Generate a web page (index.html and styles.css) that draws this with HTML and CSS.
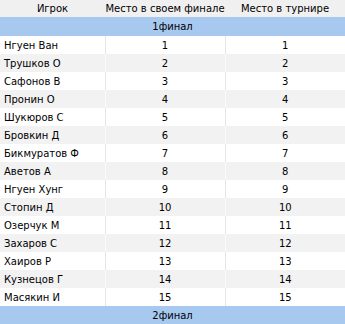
FILE: index.html
```html
<!DOCTYPE html>
<html>
<head>
<meta charset="utf-8">
<link rel="stylesheet" href="styles.css">
</head>
<body>
<table class="grid">
  <colgroup>
    <col class="c1"><col class="c2"><col class="c3">
  </colgroup>
  <thead>
    <tr class="head"><th>Игрок</th><th>Место в своем финале</th><th>Место в турнире</th></tr>
  </thead>
  <tbody>
    <tr class="group first"><td colspan="3">1финал</td></tr>
    <tr class="odd"><td class="name">Нгуен Ван</td><td>1</td><td>1</td></tr>
    <tr class="even"><td class="name">Трушков О</td><td>2</td><td>2</td></tr>
    <tr class="odd"><td class="name">Сафонов В</td><td>3</td><td>3</td></tr>
    <tr class="even"><td class="name">Пронин О</td><td>4</td><td>4</td></tr>
    <tr class="odd"><td class="name">Шукюров С</td><td>5</td><td>5</td></tr>
    <tr class="even"><td class="name">Бровкин Д</td><td>6</td><td>6</td></tr>
    <tr class="odd"><td class="name">Бикмуратов Ф</td><td>7</td><td>7</td></tr>
    <tr class="even"><td class="name">Аветов А</td><td>8</td><td>8</td></tr>
    <tr class="odd"><td class="name">Нгуен Хунг</td><td>9</td><td>9</td></tr>
    <tr class="even"><td class="name">Стопин Д</td><td>10</td><td>10</td></tr>
    <tr class="odd"><td class="name">Озерчук М</td><td>11</td><td>11</td></tr>
    <tr class="even"><td class="name">Захаров С</td><td>12</td><td>12</td></tr>
    <tr class="odd"><td class="name">Хаиров Р</td><td>13</td><td>13</td></tr>
    <tr class="even"><td class="name">Кузнецов Г</td><td>14</td><td>14</td></tr>
    <tr class="odd"><td class="name">Масякин И</td><td>15</td><td>15</td></tr>
    <tr class="group"><td colspan="3">2финал</td></tr>
  </tbody>
</table>
</body>
</html>
```
FILE: styles.css
```css
html, body {
  margin: 0;
  padding: 0;
  background: #ffffff;
}
.grid {
  width: 345px;
  border-collapse: collapse;
  table-layout: fixed;
  font-family: "DejaVu Sans", "Liberation Sans", sans-serif;
  font-size: 10px;
  color: #000000;
}
.c1 { width: 105px; }
.c2 { width: 120px; }
.c3 { width: 120px; }
.grid th, .grid td {
  padding: 0;
  text-align: center;
  font-weight: normal;
  white-space: nowrap;
  overflow: hidden;
}
.head th {
  height: 17px;
  background: #f0f0f0;
}
.group td {
  height: 18px;
  background: #a7c8ef;
}
.group.first td {
  height: 19px;
}
.odd td, .even td {
  height: 18px;
  border-right: 1px solid #e6e6e6;
}
.odd td:last-child, .even td:last-child {
  border-right: none;
}
.odd td { background: #ffffff; }
.even td { background: #f2f2f2; border-right-color: #fafafa; }
.even td:last-child { border-right: none; }
.grid td.name {
  text-align: left;
  padding-left: 4px;
}
```
